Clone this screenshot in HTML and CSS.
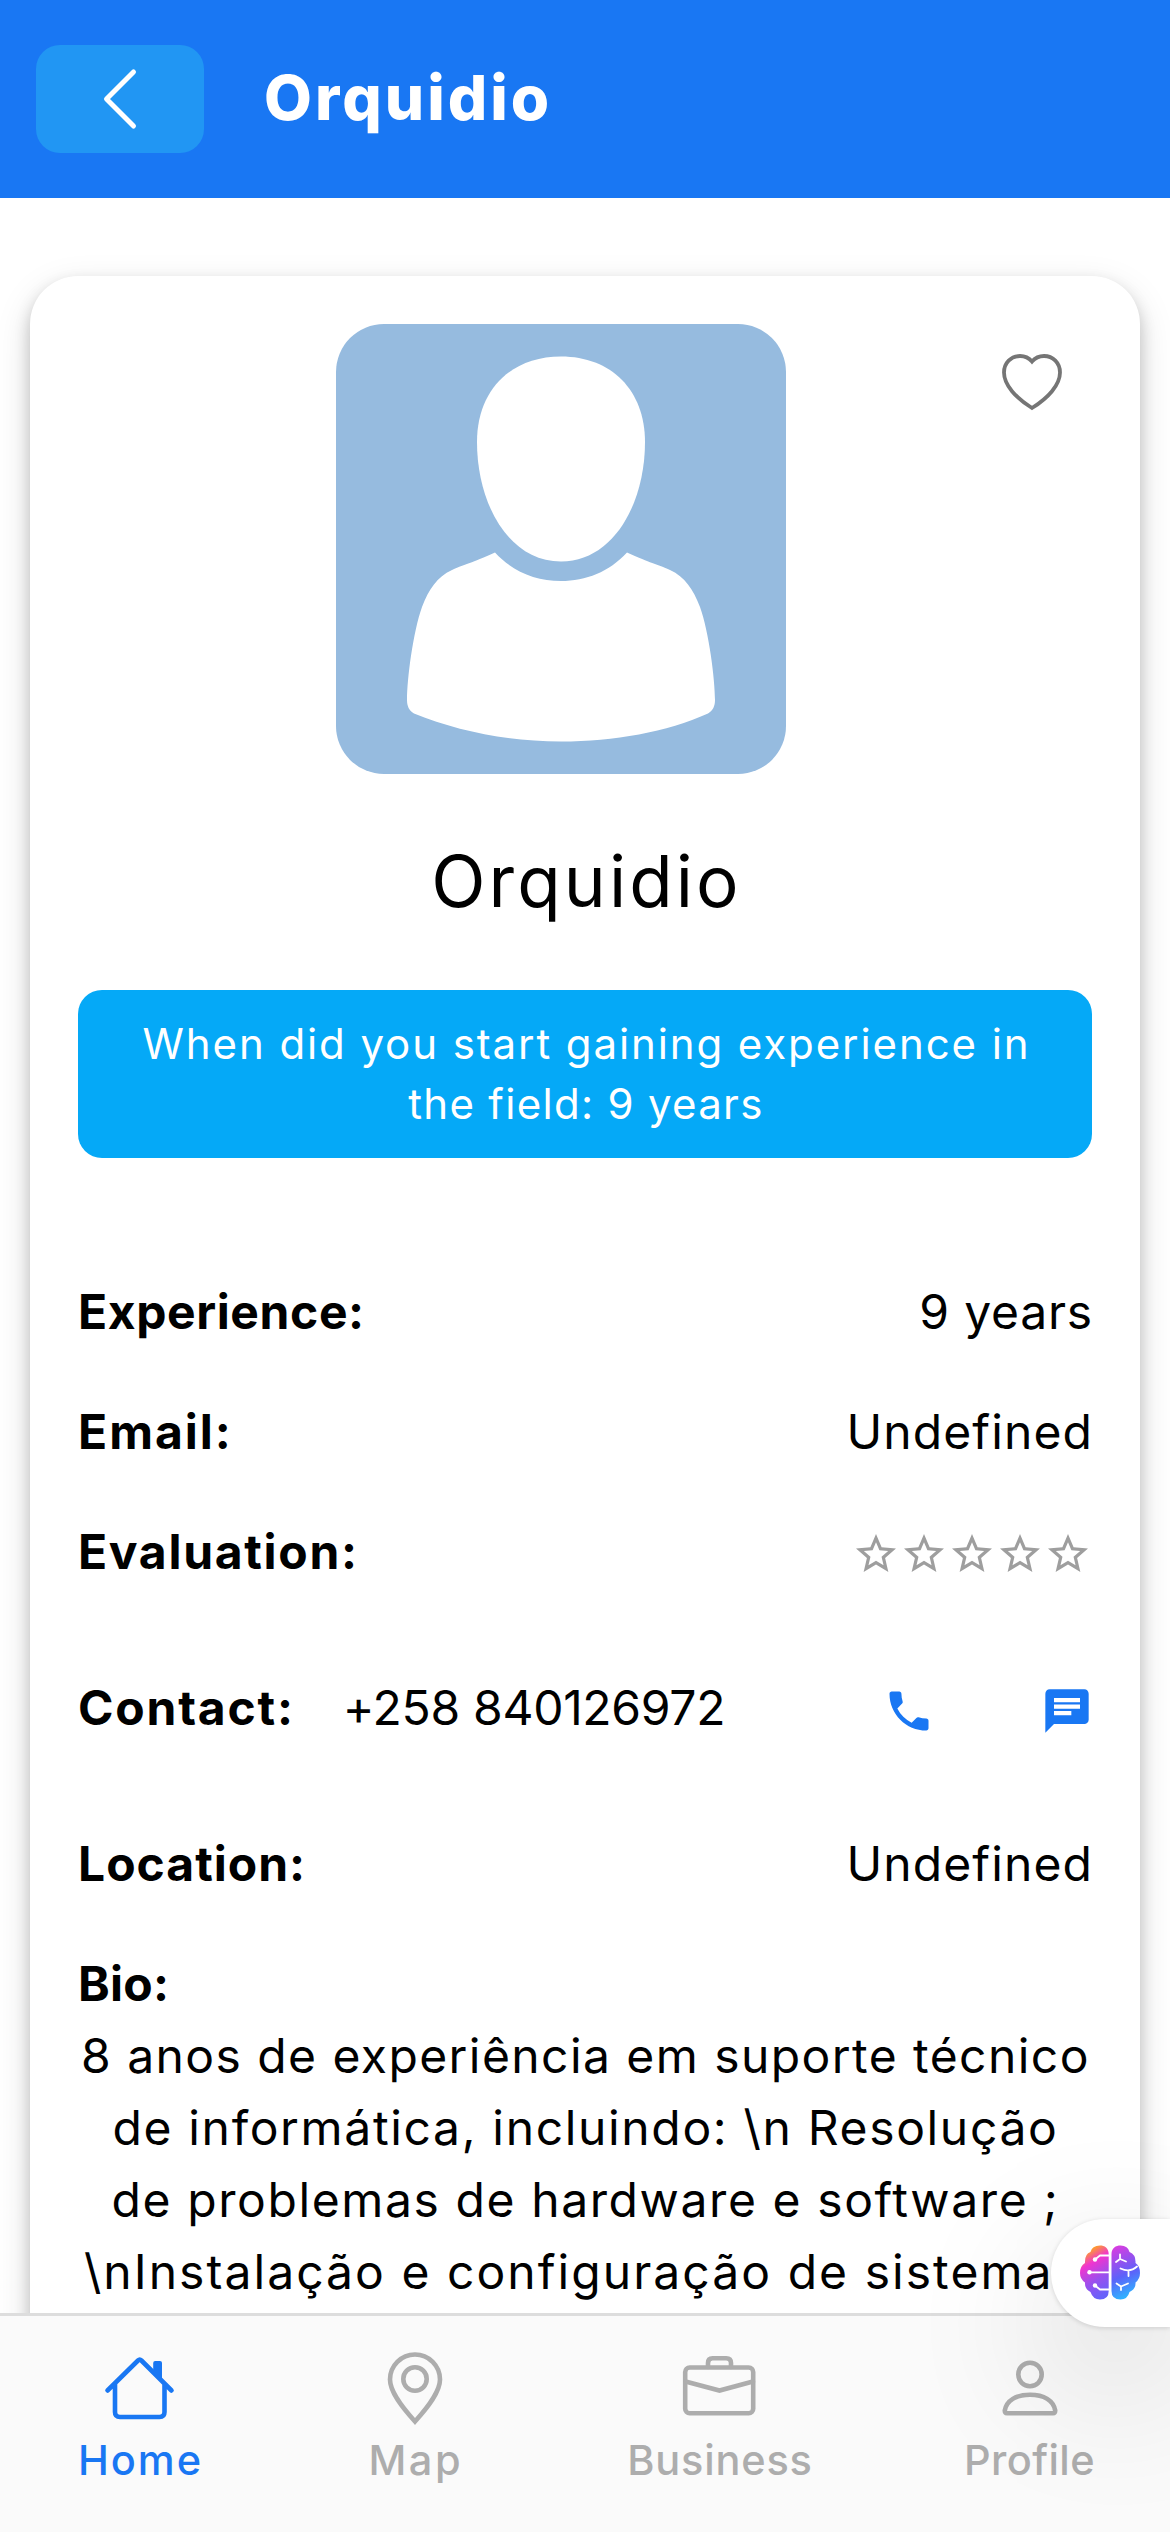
FILE: index.html
```html
<!DOCTYPE html>
<html lang="en">
<head>
<meta charset="utf-8">
<title>Orquidio</title>
<link rel="stylesheet" href="styles.css">
</head>
<body>
<div class="screen">
  <header class="header">
    <button class="back" aria-label="Back">
      <svg width="36" height="62" viewBox="0 0 36 62"><path d="M31.500 4 4.500 31 31.500 58"/></svg>
    </button>
    <h1 class="title">Orquidio</h1>
  </header>

  <main class="content">
    <section class="card">
      <div class="photo-row">
        <svg class="avatar" viewBox="0 0 450 450">
          <path d="M225 32.500C275 32.500 309 66 309 118C309 180 277 237.500 225 237.500C173 237.500 141 180 141 118C141 66 175 32.500 225 32.500Z"/>
          <path d="M159 228.500C177 248 200 257 225 257C250 257 273 248 291 228.500C316 240 319 239 334 246C349 253 357 265 364 283C373 308 379 355 379 376C379 382 377 386.500 372 389.500C331 408 278 417.500 225 417.500C172 417.500 121 407 78 389.500C73 386.500 71 382 71 376C71 355 77 308 86 283C93 265 101 253 116 246C131 239 134 240 159 228.500Z"/>
        </svg>
        <svg class="heart" width="60" height="57" viewBox="0 0 60 57"><path d="M30 7.500C27 4 22.500 2 18 2C9 2 2 9 2 18.500C2 31 14 44 30 54C46 44 58 31 58 18.500C58 9 51 2 42 2C37.500 2 33 4 30 7.500Z"/></svg>
      </div>
      <h2 class="name">Orquidio</h2>
      <div class="banner"><span class="banner-a">When did you start gaining experience in</span><span class="banner-b">the field: 9 years</span></div>

      <div class="details">
        <div class="row"><b class="l-exp">Experience:</b><span class="v-years">9 years</span></div>
        <div class="row"><b class="l-email">Email:</b><span class="v-undef">Undefined</span></div>
        <div class="row"><b class="l-eval">Evaluation:</b>
          <span class="stars">
            <svg viewBox="0 0 24 24"><path id="star" d="M22 9.240l-7.190-.620L12 2 9.190 8.630 2 9.240l5.460 4.730L5.820 21 12 17.270 18.180 21l-1.630-7.030L22 9.240zM12 15.400l-3.760 2.270 1-4.280-3.320-2.880 4.380-.380L12 6.100l1.710 4.040 4.380.380-3.320 2.880 1 4.280L12 15.400z"/></svg>
            <svg viewBox="0 0 24 24"><use href="#star"/></svg>
            <svg viewBox="0 0 24 24"><use href="#star"/></svg>
            <svg viewBox="0 0 24 24"><use href="#star"/></svg>
            <svg viewBox="0 0 24 24"><use href="#star"/></svg>
          </span>
        </div>
        <div class="row contact"><b class="l-contact">Contact:</b><span class="phone">+258 840126972</span>
          <span class="actions">
            <svg viewBox="0 0 24 24"><path d="M6.620 10.790c1.440 2.830 3.760 5.140 6.590 6.590l2.200-2.200c.270-.270.670-.360 1.020-.240 1.120.370 2.330.570 3.570.570.550 0 1 .450 1 1V20c0 .550-.450 1-1 1-9.390 0-17-7.610-17-17 0-.550.450-1 1-1h3.500c.550 0 1 .450 1 1 0 1.250.200 2.450.570 3.570.110.350.030.740-.250 1.020l-2.200 2.200z"/></svg>
            <svg viewBox="0 0 24 24"><path d="M20 2H4c-1.100 0-1.990.900-1.990 2L2 22l4-4h14c1.100 0 2-.900 2-2V4c0-1.100-.900-2-2-2zM6 9h12v2H6V9zm8 5H6v-2h8v2zm4-6H6V6h12v2z"/></svg>
          </span>
        </div>
        <div class="row"><b class="l-loc">Location:</b><span class="v-undef">Undefined</span></div>
        <div class="row"><b class="l-bio">Bio:</b></div>
      </div>
      <p class="bio">
        <span class="bio-1">8 anos de experiência em suporte técnico</span>
        <span class="bio-2">de informática, incluindo: \n Resolução</span>
        <span class="bio-3">de problemas de hardware e software ;</span>
        <span class="bio-4">\nInstalação e configuração de sistema</span>
      </p>
    </section>
  </main>

  <nav class="nav">
    <a class="tab active">
      <svg viewBox="0 0 84 78"><path d="M9.500 41.500 40 11.500Q41.700 9.800 43.400 11.500L73.500 41.500M17 35V63Q17 68 22 68H61.500Q66.500 68 66.500 63V35"/><path class="solid" d="M55.200 24V14Q55.200 12 57.200 12H62Q64 12 64 14V33Z"/></svg>
      <span class="t-home">Home</span>
    </a>
    <a class="tab">
      <svg viewBox="0 0 84 78"><path d="M42 72.500C29 58 17 43 17 30.500A25 25 0 0 1 67 30.500C67 43 55 58 42 72.500Z"/><circle cx="42" cy="30" r="11.700"/></svg>
      <span class="t-map">Map</span>
    </a>
    <a class="tab">
      <svg viewBox="0 0 84 78"><rect x="7.200" y="18.500" width="68" height="45.800" rx="4.500"/><path d="M30 18V14Q30 9.200 34.500 9.200H48.200Q53 9.200 53 14V18M7.500 32.500 41.500 41.500 75 32.500"/></svg>
      <span class="t-business">Business</span>
    </a>
    <a class="tab">
      <svg viewBox="0 0 84 78"><circle cx="42" cy="25.500" r="11.700"/><path d="M19 64.300H65Q67.300 64.300 67.200 61.500C65.500 51.500 56 45.800 42 45.800C28 45.800 18.500 51.500 16.800 61.500Q16.700 64.300 19 64.300Z"/></svg>
      <span class="t-profile">Profile</span>
    </a>
  </nav>

  <div class="assistant">
    <svg viewBox="0 0 60 55">
      <defs>
        <linearGradient id="left" gradientUnits="userSpaceOnUse" x1="6" y1="6" x2="30" y2="46"><stop offset="0" stop-color="#ffa51f"/><stop offset=".28" stop-color="#f035cf"/><stop offset=".65" stop-color="#9a50ee"/><stop offset="1" stop-color="#6861fa"/></linearGradient>
        <linearGradient id="right" gradientUnits="userSpaceOnUse" x1="34" y1="2" x2="54" y2="48"><stop offset="0" stop-color="#d93de0"/><stop offset=".6" stop-color="#5c62fa"/><stop offset="1" stop-color="#30b0ff"/></linearGradient>
      </defs>
      <path fill="url(#left)" d="M28.700 9C28.700 3 24.500.500 20 .500Q12 .500 10.500 7Q4.500 9 5 18Q0 21 0 28Q0 34 5 37.500Q4.500 44 10.500 47Q13 54.500 20 54.500Q28.700 54.500 28.700 46Z"/>
      <path fill="url(#right)" d="M31.500 9C31.500 3 36 .500 40.500 .500Q48 .500 49.500 7Q56 9.500 55.500 18Q60 21 60 28Q60 34 55.500 37.500Q56 44 49.500 47Q47.500 54.500 40.500 54.500Q31.500 54.500 31.500 46Z"/>
      <path class="trace" d="M29 10.500H20L15 14.500M29 27.300H10M29 44.500H20L15 40.500M40 9.500V14L36 17M40 14 46 16.500M40.500 23.500Q50 28 57 21.500M48.500 26V31M36.500 38.500 41 41.500 48 38.500M41 41.500V45"/>
      <circle cx="15" cy="14.500" r="2.200"/><circle cx="9.500" cy="27.300" r="2.200"/><circle cx="15" cy="40.500" r="2.200"/>
    </svg>
  </div>
</div>
</body>
</html>
```
FILE: styles.css
```css
* { box-sizing: border-box; }
body { margin: 0; background: #fff; font-family: Inter, "Open Sans", sans-serif; color: #000; }
.screen { position: relative; width: 1170px; height: 2532px; overflow: hidden; display: flex; flex-direction: column; background: #fff; }
.header { flex: none; height: 198px; padding-left: 36px; display: flex; align-items: center; gap: 60px; background: #1977f3; }
.back { width: 168px; height: 108px; padding: 0; border: 0; border-radius: 24px; background: #2196f3; display: flex; align-items: center; justify-content: center; }
.back svg { fill: none; stroke: #fff; stroke-width: 5; stroke-linecap: round; stroke-linejoin: round; }
.title { margin: 0 0 2px; color: #fff; font-size: 62px; line-height: 72px; font-weight: 800; letter-spacing: 3px; white-space: nowrap; }
.content { flex: 1; min-height: 0; overflow: hidden; padding: 78px 30px 0; }
.card { height: 2400px; padding: 48px 48px 0; border-radius: 48px; background: #fff; box-shadow: 0 12px 36px rgba(0,0,0,.13), 0 8px 16px rgba(0,0,0,.2); }
.photo-row { display: flex; align-items: flex-start; padding: 0 30px 0 258px; justify-content: space-between; }
.avatar { width: 450px; height: 450px; border-radius: 48px; background: #96bbdf; fill: #fff; }
.heart { margin-top: 30px; fill: none; stroke: #757575; stroke-width: 3.8; }
.name { margin: 53px 0 0; padding-left: 3px; font-size: 71px; line-height: 108px; font-weight: 400; letter-spacing: 3.1px; text-align: center; white-space: nowrap; }
.banner { margin-top: 55px; height: 168px; padding: 24px 0; border-radius: 24px; background: #05a9f7; color: #fff; font-size: 42px; line-height: 60px; text-align: center; white-space: nowrap; }
.banner span { display: block; }
.banner-a { padding-left: 3px; letter-spacing: 1.9px; }
.banner-b { padding-left: 2px; letter-spacing: 1.3px; }
.details { margin-top: 118px; display: flex; flex-direction: column; gap: 48px; }
.row { height: 72px; display: flex; align-items: center; justify-content: space-between; font-size: 48px; line-height: 72px; white-space: nowrap; }
.row b { font-weight: 700; }
.l-exp { letter-spacing: .6px; }
.l-email { letter-spacing: 2px; }
.l-eval { letter-spacing: 1.7px; }
.l-contact { letter-spacing: 1.8px; }
.l-loc { letter-spacing: 1px; }
.l-bio { letter-spacing: .3px; }
.v-years { letter-spacing: .8px; margin-right: -1px; }
.v-undef { letter-spacing: 1.1px; margin-right: -1px; }
.contact { margin: 36px 0; justify-content: flex-start; }
.phone { margin-left: 48px; letter-spacing: -.3px; }
.stars { display: flex; }
.stars svg { width: 48px; height: 48px; fill: #9e9e9e; margin-top: 3px; }
.actions { display: flex; gap: 106px; margin-left: auto; margin-right: -1px; }
.actions svg { width: 52px; height: 52px; fill: #1977f3; margin-top: 6px; }
.bio { margin: 0; font-size: 48px; line-height: 72px; text-align: center; white-space: nowrap; }
.bio span { display: block; padding-left: 1px; }
.bio-1 { letter-spacing: 1.43px; }
.bio-2 { letter-spacing: 1.66px; }
.bio-3 { letter-spacing: 1.6px; }
.bio .bio-4 { text-align: left; padding-left: 6px; letter-spacing: 2.05px; }
.nav { flex: none; height: 219px; padding-top: 33px; border-top: 3px solid #ddd; background: #fafafa; display: grid; grid-template-columns: 279px 271px 339px 281px; }
.tab { display: flex; flex-direction: column; align-items: center; color: #adadad; font-size: 41.5px; line-height: 60px; font-weight: 500; }
.tab svg { width: 84px; height: 78px; margin-bottom: 3px; fill: none; stroke: currentColor; stroke-width: 4.6; stroke-linecap: round; }
.tab .solid { fill: currentColor; stroke: none; }
.tab.active { color: #1977f3; }
.t-home { letter-spacing: 2px; margin-right: -2px; }
.t-map { letter-spacing: 2.5px; margin-right: -2.5px; }
.t-business { letter-spacing: .8px; margin-right: -1px; }
.t-profile { letter-spacing: .4px; }
.assistant { position: absolute; right: 0; top: 2219px; width: 119px; height: 108px; padding: 26px 0 0 29px; border-radius: 54px 0 0 54px; background: #fff; box-shadow: 0 50px 150px rgba(0,0,0,.18), 0 1px 5px rgba(0,0,0,.14); }
.assistant svg { display: block; width: 60px; height: 55px; }
.assistant .trace { fill: none; stroke: #fff; stroke-width: 1.8; stroke-linecap: round; stroke-linejoin: round; }
.assistant circle { fill: #fff; }
```
